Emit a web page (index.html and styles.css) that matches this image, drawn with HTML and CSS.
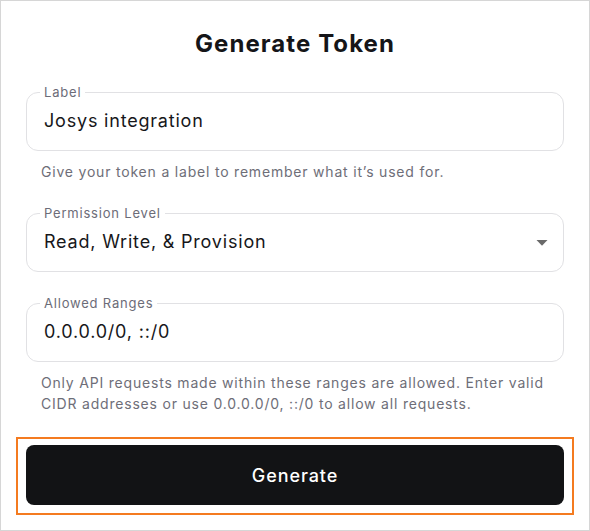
FILE: index.html
```html
<!DOCTYPE html>
<html lang="en">
<head>
<meta charset="utf-8">
<title>Generate Token</title>
<link rel="stylesheet" href="styles.css">
</head>
<body>
<div class="page">
  <h1 class="title">Generate Token</h1>
  <form class="form">
    <div class="field">
      <fieldset class="outline">
        <legend class="legend">Label</legend>
        <div class="value">Josys integration</div>
      </fieldset>
      <p class="helper">Give your token a label to remember what it’s used for.</p>
    </div>
    <div class="field">
      <fieldset class="outline">
        <legend class="legend">Permission Level</legend>
        <div class="value select">
          <span>Read, Write, &amp; Provision</span>
          <svg class="arrow" width="12" height="6" viewBox="0 0 12 6"><path d="M0.5 0 L11.5 0 L6 5.8 Z" fill="#6a6a6a"/></svg>
        </div>
      </fieldset>
    </div>
    <div class="field">
      <fieldset class="outline">
        <legend class="legend">Allowed Ranges</legend>
        <div class="value">0.0.0.0/0, ::/0</div>
      </fieldset>
      <p class="helper">Only API requests made within these ranges are allowed. Enter valid CIDR addresses or use 0.0.0.0/0, ::/0 to allow all requests.</p>
    </div>
    <div class="highlight">
      <button type="button" class="btn">Generate</button>
    </div>
  </form>
</div>
</body>
</html>
```

FILE: styles.css
```css
* { box-sizing: border-box; }
html, body { margin: 0; padding: 0; background: #ffffff; }
body { font-family: Inter, "Noto Sans", sans-serif; color: #17171a; letter-spacing: 0.05em; }

.page {
  width: 590px;
  height: 531px;
  border: 1px solid #d6d6d6;
  padding: 27px 25px 0;
}

.title {
  margin: 0;
  text-align: center;
  font-size: 24px;
  line-height: 32px;
  font-weight: 700;
  letter-spacing: 0.045em;
  color: #151518;
}

.form {
  margin-top: 24px;
  display: flex;
  flex-direction: column;
  gap: 23px;
}

.field { display: flex; flex-direction: column; }

.outline {
  margin: 0;
  border: 1px solid #e1e1e4;
  border-radius: 12px;
  padding: 0 16px 0 13px;
  min-width: 0;
}

.legend {
  padding: 0 4px;
  font-size: 13px;
  line-height: 16px;
  color: #6c6c78;
}

.value {
  padding: 9px 0 17px 4px;
  font-size: 18px;
  line-height: 24px;
  color: #17171a;
}

.select {
  display: flex;
  align-items: center;
  justify-content: space-between;
}

.arrow { margin-right: -1px; margin-top: 2px; }

.helper {
  margin: 10px 0 0 15px;
  font-size: 14px;
  line-height: 21px;
  color: #6e6e78;
}

.highlight {
  margin: 0 -10px;
  border: 2px solid #f47b20;
  padding: 6px 8px 8px;
}

.btn {
  display: block;
  width: 100%;
  height: 60px;
  border: 0;
  border-radius: 8px;
  background: #121315;
  color: #ffffff;
  font-family: Inter, "Noto Sans", sans-serif;
  font-size: 18px;
  font-weight: 500;
  letter-spacing: 0.05em;
  cursor: pointer;
}
```
